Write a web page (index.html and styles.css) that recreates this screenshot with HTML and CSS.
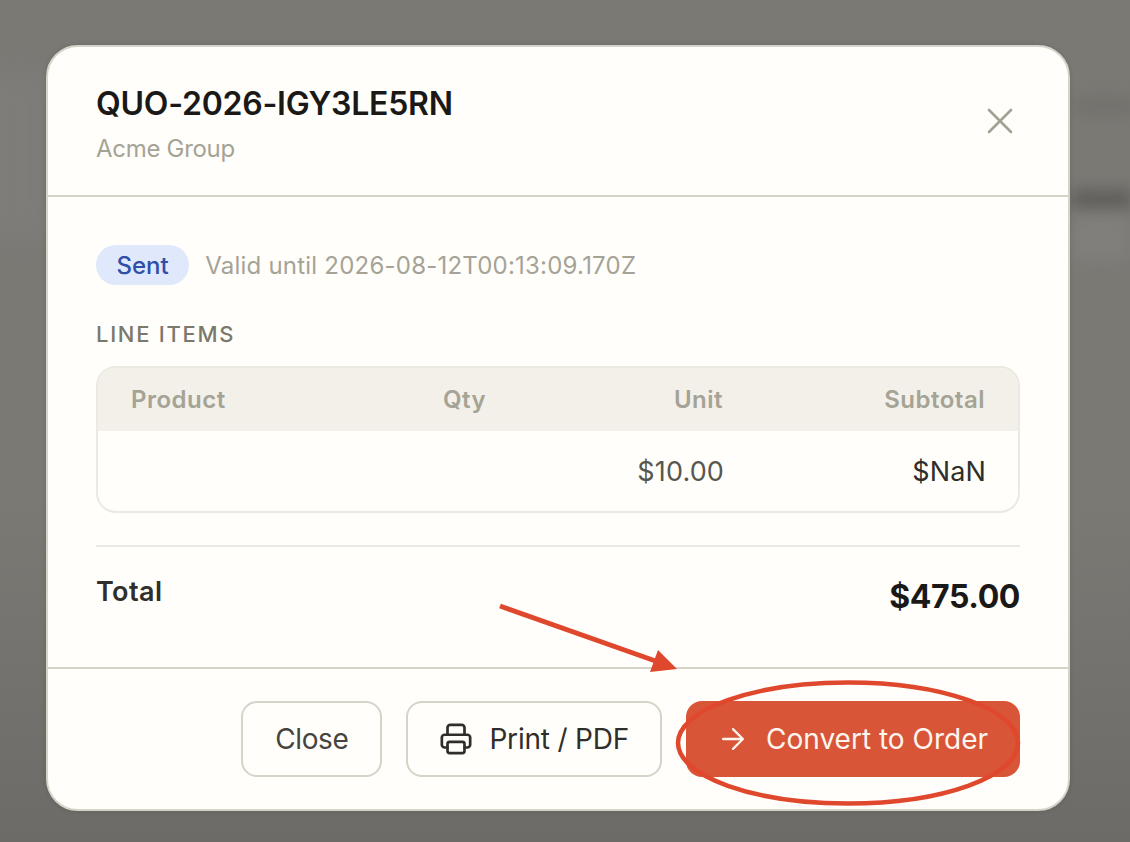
FILE: index.html
```html
<!DOCTYPE html>
<html lang="en">
<head>
<meta charset="utf-8">
<title>Quote QUO-2026-IGY3LE5RN</title>
<link rel="stylesheet" href="styles.css">
</head>
<body>
<div class="backdrop" aria-hidden="true">
  <div class="smear smear-a"></div>
  <div class="smear smear-b"></div>
  <div class="smear smear-c"></div>
  <div class="smear smear-d"></div>
</div>
<main class="modal">
  <header class="modal-head">
    <div class="head-text">
      <h1 class="title">QUO-2026-IGY3LE5RN</h1>
      <p class="subtitle">Acme Group</p>
    </div>
    <svg class="close-x" viewBox="0 0 28 28" width="28" height="28" fill="none" stroke="#a3a193" stroke-width="2.6" stroke-linecap="round"><path d="M3 3 25 25M25 3 3 25"/></svg>
  </header>
  <section class="modal-body">
    <div class="status-row">
      <span class="badge">Sent</span>
      <span class="valid">Valid until 2026-08-12T00:13:09.170Z</span>
    </div>
    <h2 class="section-label">LINE ITEMS</h2>
    <div class="table">
      <div class="row row-head">
        <span>Product</span><span>Qty</span><span class="num">Unit</span><span class="num">Subtotal</span>
      </div>
      <div class="row row-item">
        <span></span><span></span><span class="num">$10.00</span><span class="num strong">$NaN</span>
      </div>
    </div>
    <div class="total">
      <span class="total-label">Total</span>
      <span class="total-value">$475.00</span>
    </div>
  </section>
  <footer class="modal-foot">
    <button class="btn btn-close">Close</button>
    <button class="btn btn-print">
      <svg viewBox="0 0 24 24" width="34" height="34" fill="none" stroke="#2f2e2b" stroke-width="1.9" stroke-linecap="round" stroke-linejoin="round"><path d="M6 9V4a2 2 0 0 1 2-2h8a2 2 0 0 1 2 2v5"/><path d="M6 18H4a2 2 0 0 1-2-2v-5a2 2 0 0 1 2-2h16a2 2 0 0 1 2 2v5a2 2 0 0 1-2 2h-2"/><rect x="6" y="14" width="12" height="8" rx="1.5"/></svg>
      Print / PDF
    </button>
    <button class="btn btn-primary">
      <svg viewBox="0 0 24 24" width="34" height="34" fill="none" stroke="#fdf6ef" stroke-width="1.6" stroke-linecap="round" stroke-linejoin="round"><path d="M5 12h14M12 5l7 7-7 7"/></svg>
      Convert to Order
    </button>
  </footer>
</main>
<svg class="annotation" viewBox="0 0 1130 842" width="1130" height="842" fill="none">
  <ellipse cx="848" cy="743" rx="170" ry="60.5" stroke="#e0482e" stroke-width="4.5"/>
  <path d="M500 606 664 664" stroke="#e0482e" stroke-width="5"/>
  <path d="M658 650 677 669 650 672Z" fill="#e0482e"/>
</svg>
</body>
</html>
```
FILE: styles.css
```css
* { box-sizing: border-box; }
html, body { margin: 0; height: 842px; overflow: hidden; }
body {
  position: relative;
  background: linear-gradient(180deg, #7b7974 0%, #7b7974 60%, #6c6b67 100%);
  font-family: Inter, "Liberation Sans", sans-serif;
  padding: 45px 60px 31px 46px;
}
.backdrop { position: absolute; inset: 0; overflow: hidden; }
.smear { position: absolute; filter: blur(8px); }
.smear-a { left: 1075px; top: 100px; width: 60px; height: 12px; background: #6f6e69; }
.smear-b { left: 1072px; top: 190px; width: 60px; height: 20px; background: #5f5e5a; }
.smear-c { left: 1070px; top: 215px; width: 60px; height: 45px; background: #807f7b; }
.smear-d { left: -20px; top: 70px; width: 66px; height: 170px; background: #7e7d7a; filter: blur(14px); }

.modal {
  position: relative;
  width: 1024px;
  height: 766px;
  background: #fffefa;
  border: 2px solid #d6d4c8;
  border-radius: 32px;
  display: flex;
  flex-direction: column;
  box-shadow: 0 0 5px rgba(0, 0, 0, 0.12);
}
.modal-head {
  height: 150px;
  flex: none;
  border-bottom: 2px solid #d6d4c8;
  padding: 36px 54px 0 48px;
  display: flex;
  justify-content: space-between;
  align-items: flex-start;
}
.title {
  margin: 0;
  font-size: 32px;
  line-height: 42px;
  font-weight: 600;
  letter-spacing: -0.25px;
  color: #1a1917;
}
.subtitle {
  margin: 8px 0 0;
  font-size: 24px;
  line-height: 32px;
  letter-spacing: -0.3px;
  color: #a5a396;
}
.close-x { margin-top: 24px; }

.modal-body {
  flex: 1;
  padding: 48px 48px 0;
}
.status-row { display: flex; align-items: center; gap: 16px; height: 40px; }
.badge {
  background: #dfe9fb;
  color: #2f4ea8;
  font-size: 24px;
  line-height: 39px;
  padding: 1px 20.5px 0;
  border-radius: 20px;
  font-weight: 500;
}
.valid { padding-top: 1px; font-size: 24px; letter-spacing: 0.22px; color: #a5a396; }
.section-label {
  margin: 33px 0 16px;
  font-size: 22px;
  line-height: 32px;
  font-weight: 500;
  letter-spacing: 1.7px;
  color: #7b786c;
}
.table {
  border: 2px solid #ece9e2;
  border-radius: 20px;
  overflow: hidden;
  height: 147px;
}
.row {
  display: grid;
  grid-template-columns: 312px minmax(0, 1fr) 240px 262px;
  padding: 0 32px;
  align-items: center;
}
.row-head {
  height: 63px;
  padding: 0 33px;
  background: #f3f0e9;
  color: #a5a396;
  font-size: 24px;
  font-weight: 600;
  letter-spacing: 0.5px;
}
.row-item { height: 80px; font-size: 27px; letter-spacing: 0.15px; color: #58574f; }
.num { text-align: right; }
.strong { color: #2f2e2b; }
.total {
  margin-top: 32px;
  border-top: 2px solid #ece9e2;
  padding-top: 27px;
  display: flex;
  justify-content: space-between;
  align-items: flex-start;
}
.total-label { font-size: 27px; line-height: 36px; font-weight: 600; letter-spacing: 0.4px; color: #2f2e2b; }
.total-value { font-size: 32px; line-height: 46px; font-weight: 700; letter-spacing: -0.4px; color: #1a1917; }

.modal-foot {
  flex: none;
  height: 142px;
  border-top: 2px solid #d6d4c8;
  padding: 32px 48px 0;
  display: flex;
  justify-content: flex-end;
  align-items: flex-start;
  gap: 24px;
}
.btn {
  height: 76px;
  padding: 0 32px;
  border: 2px solid #d6d4c8;
  border-radius: 16px;
  background: transparent;
  font: 400 28px Inter, "Liberation Sans", sans-serif;
  color: #45443f;
  display: flex;
  align-items: center;
  gap: 16px;
}
.btn-close { padding: 0 32px; letter-spacing: -0.4px; }
.btn-print { padding: 0 31px 0 30.5px; gap: 16.5px; letter-spacing: -0.2px; color: #2f2e2b; }
.btn-primary {
  padding: 0 32px 0 30px;
  background: #d85538;
  border: none;
  color: #fdf6ef;
}
.annotation { position: absolute; left: 0; top: 0; pointer-events: none; }
```
